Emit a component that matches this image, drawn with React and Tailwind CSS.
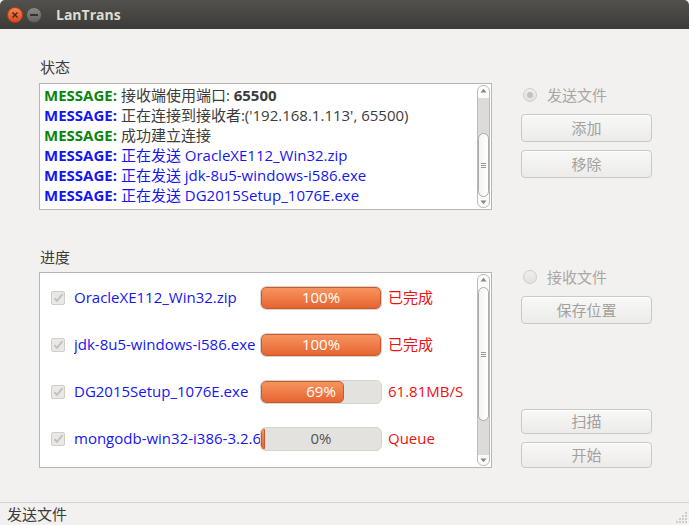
import React from "react";

const FONT = '"Open Sans", "Noto Sans CJK SC", sans-serif';

function Scrollbar({ thumbTop, thumbHeight, grayTop, grayHeight }) {
  return (
    <div className="relative w-[13px] my-[1px] mr-[1px] rounded-[6px] border border-[#bebbb6] bg-[#fbfbfa] overflow-hidden">
      <div className="absolute left-0 right-0 top-[2px] flex justify-center">
        <svg width="7" height="5" viewBox="0 0 7 5"><path d="M0.5 4.5 L3.5 0.8 L6.5 4.5 Z" fill="#8a8884" /></svg>
      </div>
      <div className="absolute left-0 right-0 bottom-[2px] flex justify-center">
        <svg width="7" height="5" viewBox="0 0 7 5"><path d="M0.5 0.5 L3.5 4.2 L6.5 0.5 Z" fill="#8a8884" /></svg>
      </div>
      <div className="absolute left-0 right-0 bg-[#dcdbd8]" style={{ top: grayTop, height: grayHeight }} />
      <div
        className="absolute left-0 right-0 rounded-[6px] border border-[#aeaba6] bg-gradient-to-r from-[#f4f4f3] to-[#ffffff] flex flex-col items-center justify-center gap-[1px]"
        style={{ top: thumbTop, height: thumbHeight }}
      >
        <div className="w-[5px] h-[1px] bg-[#9a9893]" />
        <div className="w-[5px] h-[1px] bg-[#9a9893]" />
        <div className="w-[5px] h-[1px] bg-[#9a9893]" />
      </div>
    </div>
  );
}

function Radio({ label, checked }) {
  return (
    <div className="flex items-center h-[16px] pl-[2px]">
      <div className="w-[14px] h-[14px] rounded-full border border-[#cfcdc9] bg-gradient-to-b from-[#efeeed] to-[#e2e1df] flex items-center justify-center">
        {checked && <div className="w-[6px] h-[6px] rounded-full bg-[#c3c1bd]" />}
      </div>
      <span className="ml-[10px] text-[15px] text-[#a9a7a3] leading-[16px]">{label}</span>
    </div>
  );
}

function Button({ label, h = 27, mt }) {
  return (
    <div
      className="w-[131px] rounded-[4px] border border-[#cac8c4] bg-gradient-to-b from-[#f8f8f7] to-[#ecebe9] flex items-center justify-center text-[15px] text-[#a3a19d] shadow-[inset_0_1px_0_#ffffff]"
      style={{ height: h, marginTop: mt }}
    >
      {label}
    </div>
  );
}

function Checkbox() {
  return (
    <div className="w-[14px] h-[14px] rounded-[2px] border border-[#d0cecb] bg-[#e9e8e6] flex items-center justify-center">
      <svg width="12" height="12" viewBox="0 0 12 12">
        <path d="M2.5 6.2 L5 8.8 L10.5 2.2" stroke="#c3c1bd" strokeWidth="2" fill="none" />
      </svg>
    </div>
  );
}

function Progress({ pct }) {
  return (
    <div className="relative w-[122px] h-[24px] rounded-[6px] border border-[#d6d4d0] bg-[#e3e2df] overflow-hidden">
      <div
        className="absolute left-0 top-0 bottom-0 rounded-[5px] border border-[#c9592c] bg-gradient-to-b from-[#f8945f] to-[#e5642f]"
        style={{ width: pct === 0 ? 4 : `${pct}%` }}
      />
      <div
        className={`absolute inset-0 flex items-center justify-center text-[15px] ${pct === 0 ? "text-[#555453]" : "text-white"}`}
      >
        {pct}%
      </div>
    </div>
  );
}

const rows = [
  { name: "OracleXE112_Win32.zip", pct: 100, status: "已完成" },
  { name: "jdk-8u5-windows-i586.exe", pct: 100, status: "已完成" },
  { name: "DG2015Setup_1076E.exe", pct: 69, status: "61.81MB/S" },
  { name: "mongodb-win32-i386-3.2.6", pct: 0, status: "Queue" },
];

const logs = [
  { c: "green", text: <span className="text-[#3c3c3c]">接收端使用端口: <b>65500</b></span> },
  { c: "blue", text: <span className="text-[#3c3c3c]">正在连接到接收者:('192.168.1.113', 65500)</span> },
  { c: "green", text: <span className="text-[#3c3c3c]">成功建立连接</span> },
  { c: "blue", text: <span className="text-[#1616f0]">正在发送 OracleXE112_Win32.zip</span> },
  { c: "blue", text: <span className="text-[#1616f0]">正在发送 jdk-8u5-windows-i586.exe</span> },
  { c: "blue", text: <span className="text-[#1616f0]">正在发送 DG2015Setup_1076E.exe</span> },
];

export default function App() {
  return (
    <div className="w-[689px] h-[525px] flex flex-col bg-[#f2f1f0] overflow-hidden" style={{ fontFamily: FONT }}>
      {/* Title bar */}
      <div className="h-[29px] flex items-center bg-gradient-to-b from-[#52514d] to-[#3c3b37] rounded-t-[5px] shrink-0">
        <div className="ml-[7px] w-[16px] h-[16px] rounded-full bg-gradient-to-b from-[#f5834f] to-[#dd4814] border border-[#b83e13] flex items-center justify-center">
          <svg width="8" height="8" viewBox="0 0 8 8"><path d="M1.5 1.5 L6.5 6.5 M6.5 1.5 L1.5 6.5" stroke="#3a2a22" strokeWidth="1.4" /></svg>
        </div>
        <div className="ml-[3px] w-[16px] h-[16px] rounded-full bg-gradient-to-b from-[#8a8883] to-[#66645f] border border-[#4c4b47] flex items-center justify-center">
          <div className="w-[8px] h-[2px] bg-[#34332f]" />
        </div>
        <span className="ml-[14px] text-[14px] font-bold text-[#dfdbd2]">LanTrans</span>
      </div>

      {/* Content */}
      <div className="flex-1 flex pl-[39px] pt-[30px]">
        {/* Left column */}
        <div className="w-[453px] flex flex-col">
          <div className="h-[16px] leading-[16px] text-[15px] text-[#3c3c3c] pl-[1px]">状态</div>
          <div className="mt-[8px] h-[127px] flex bg-white border border-[#b9b6b1]">
            <div className="flex-1 pl-[4px] pt-[1px] text-[15px] leading-[20px] whitespace-nowrap overflow-hidden">
              {logs.map((l, i) => (
                <div key={i}>
                  <b className={l.c === "green" ? "text-[#0a860a]" : "text-[#1616f0]"}>MESSAGE:</b> {l.text}
                </div>
              ))}
            </div>
            <Scrollbar thumbTop={47} thumbHeight={64} grayTop={12} grayHeight={40} />
          </div>

          <div className="mt-[39px] h-[16px] leading-[16px] text-[15px] text-[#3c3c3c] pl-[1px]">进度</div>
          <div className="mt-[7px] h-[196px] flex bg-white border border-[#b9b6b1]">
            <div className="flex-1 pt-[1px] overflow-hidden">
              {rows.map((r, i) => (
                <div key={i} className="h-[47px] flex items-center pl-[11px]">
                  <Checkbox />
                  <div className="ml-[9px] w-[186px] text-[15px] text-[#1616f0] whitespace-nowrap overflow-hidden">{r.name}</div>
                  <Progress pct={r.pct} />
                  <div className="ml-[6px] text-[15px] text-[#f01010] whitespace-nowrap">{r.status}</div>
                </div>
              ))}
            </div>
            <Scrollbar thumbTop={12} thumbHeight={134} grayTop={140} grayHeight={40} />
          </div>
        </div>

        {/* Right column */}
        <div className="ml-[29px] flex flex-col">
          <div className="mt-[28px]"><Radio label="发送文件" checked /></div>
          <Button label="添加" mt={11} h={28} />
          <Button label="移除" mt={8} h={28} />
          <div className="mt-[91px]"><Radio label="接收文件" /></div>
          <Button label="保存位置" mt={11} h={28} />
          <Button label="扫描" mt={85} h={25} />
          <Button label="开始" mt={8} h={26} />
        </div>
      </div>

      {/* Status bar */}
      <div className="h-[23px] shrink-0 border-t border-[#d6d4d0] flex items-center justify-between pl-[7px] pr-[2px] relative">
        <span className="text-[15px] text-[#3c3c3c]">发送文件</span>
        <div className="grid grid-cols-4 gap-[1px] self-end mb-[2px]">
          {Array.from({ length: 16 }).map((_, i) => {
            const r = Math.floor(i / 4), c = i % 4;
            return <div key={i} className={`w-[2px] h-[2px] ${r + c >= 3 ? "bg-[#cfcdc9]" : "bg-transparent"}`} />;
          })}
        </div>
      </div>
    </div>
  );
}
